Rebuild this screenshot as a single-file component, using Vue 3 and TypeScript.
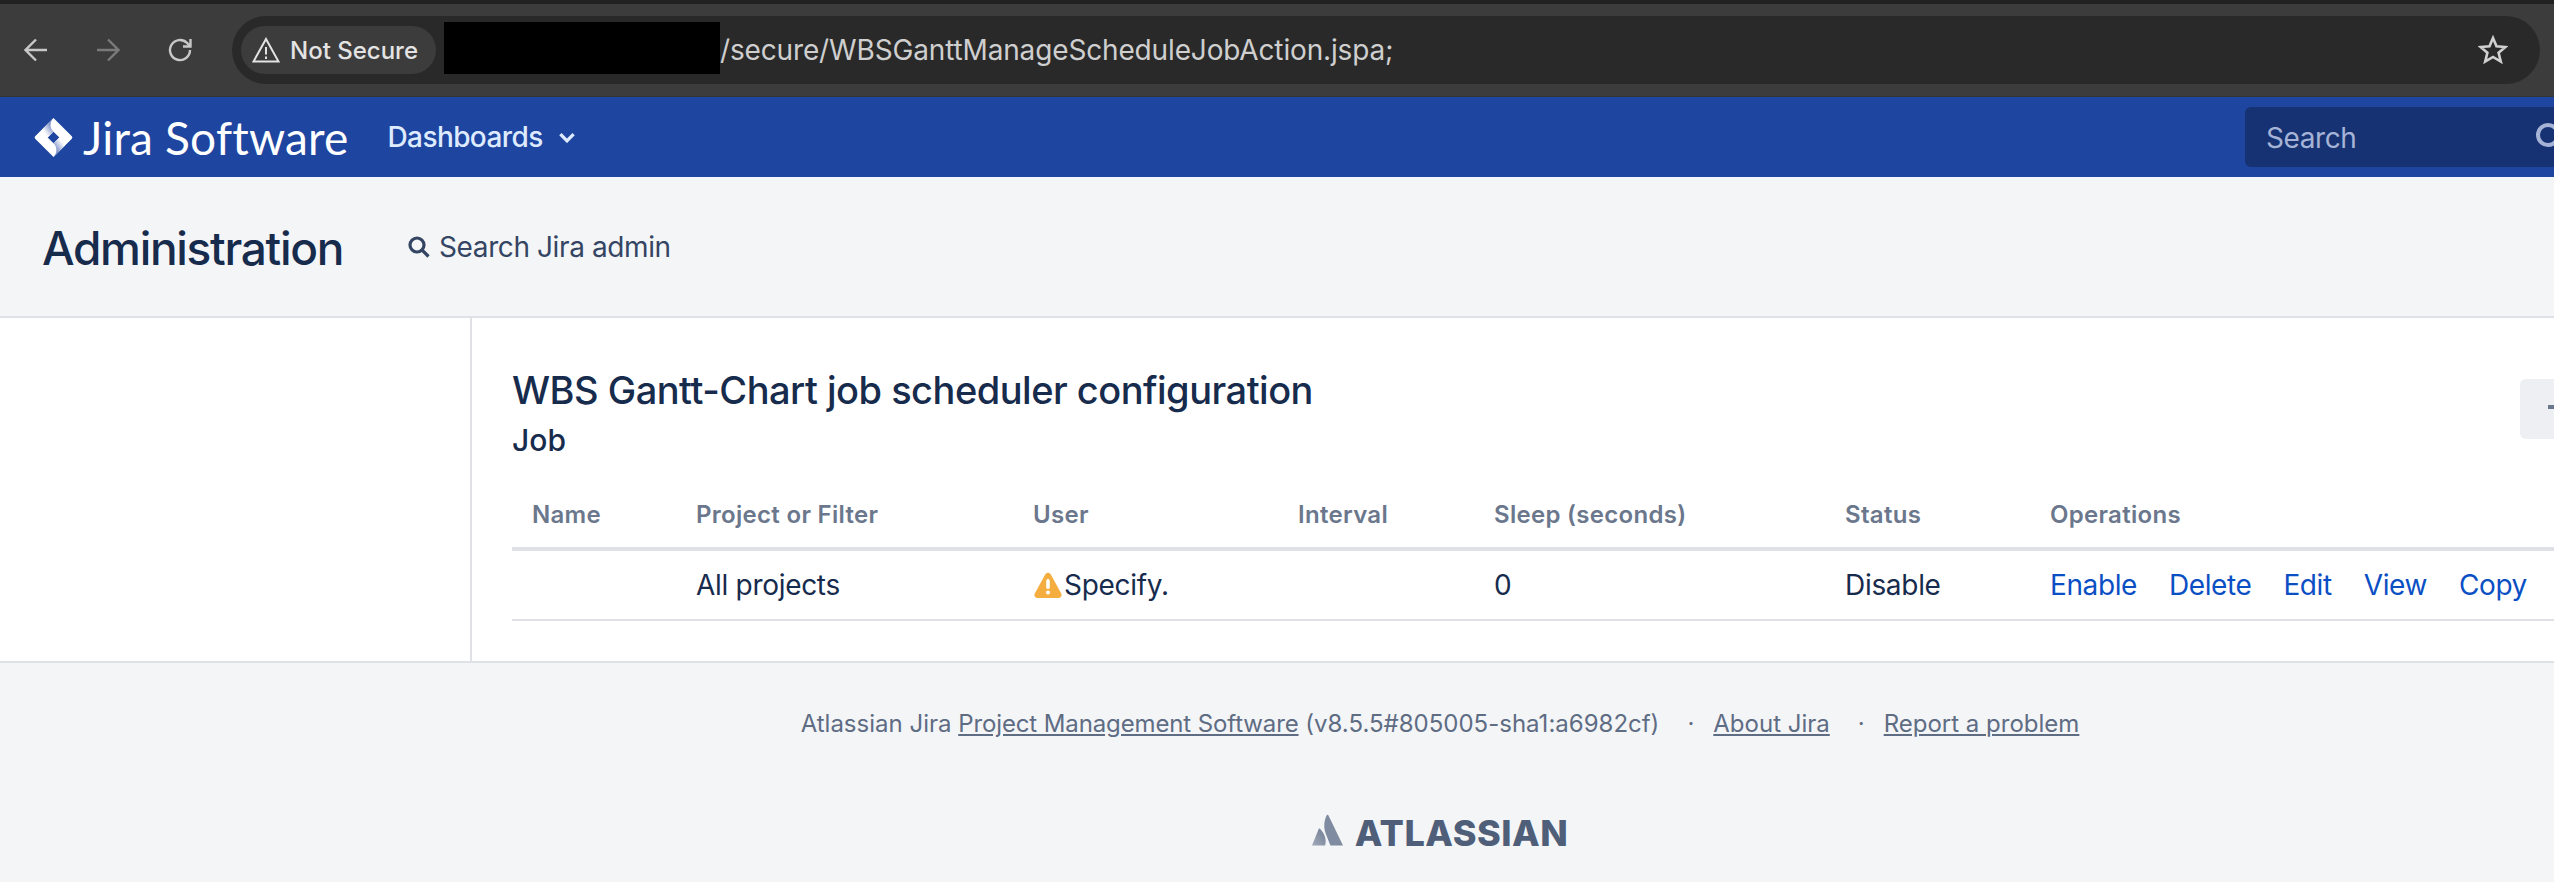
<template>
  <div class="screen">
    <div class="tab-strip"></div>
    <div class="toolbar">
      <svg class="nav-icon" viewBox="0 0 24 24"><path d="M23 12H1.500M12 1.500 1.500 12 12 22.500" /></svg>
      <svg class="nav-icon dim" viewBox="0 0 24 24"><path d="M1 12h21.500M12 1.500 22.500 12 12 22.500" /></svg>
      <svg class="nav-icon" viewBox="0 0 24 24"><path d="M22 12a10 10 0 1 1-3-7.100L22 8M22.500 1v7.500H15" /></svg>
      <div class="omnibox">
        <div class="chip">
          <svg class="warn-outline" viewBox="0 0 28 26"><path d="M14 2 1.500 24.500h25zM14 10v7.500M14 19.500v2.500" /></svg>
          <span>Not Secure</span>
        </div>
        <div class="redact"></div>
        <span class="url">/secure/WBSGanttManageScheduleJobAction.jspa;</span>
        <svg class="star" viewBox="0 0 30 30"><path d="m15 3 3.500 8.300 9 .7-6.900 5.800 2.200 8.800-7.800-4.700-7.800 4.700 2.200-8.800L2.500 12l9-.7z" /></svg>
      </div>
    </div>

    <div class="page">
      <header class="topnav">
        <svg class="jira-mark" viewBox="0 0 40 40">
          <defs>
            <linearGradient id="fadeTop" gradientUnits="userSpaceOnUse" x1="18" y1="8" x2="10" y2="14">
              <stop offset="0" stop-color="#7f93c8" />
              <stop offset="1" stop-color="#ffffff" />
            </linearGradient>
            <linearGradient id="fadeBottom" gradientUnits="userSpaceOnUse" x1="22" y1="32" x2="30" y2="26">
              <stop offset="0" stop-color="#7f93c8" />
              <stop offset="1" stop-color="#ffffff" />
            </linearGradient>
          </defs>
          <path fill="#fff" fill-rule="evenodd" d="M20 0 38.800 18.800a1.700 1.700 0 0 1 0 2.400L20 40 1.200 21.200a1.700 1.700 0 0 1 0-2.400zM20 14l-6 6 6 6 6-6z" />
          <path fill="url(#fadeTop)" d="M20 0 8 12l6 8 6-6c-4-4-4-10 0-14z" />
          <path fill="url(#fadeBottom)" d="M20 40l12-12-6-8-6 6c4 4 4 10 0 14z" />
        </svg>
        <span class="jira-name">Jira Software</span>
        <span class="nav-item">Dashboards</span>
        <svg class="chevron" viewBox="0 0 16 10"><path d="m2 2 6 6 6-6" /></svg>
        <div class="nav-search">
          <span>Search</span>
          <svg class="nav-search-icon" viewBox="0 0 32 32"><circle cx="14" cy="14" r="10" /><path d="m22 22 8 8" /></svg>
        </div>
      </header>

      <div class="admin-head">
        <h1>Administration</h1>
        <svg class="admin-search-icon" viewBox="0 0 22 22"><circle cx="9" cy="9" r="7" /><path d="m14 14 6.500 6.500" /></svg>
        <span class="admin-search">Search Jira admin</span>
      </div>

      <div class="body">
        <aside class="side"></aside>
        <main class="content">
          <div class="title-row">
            <div>
              <h2>WBS Gantt-Chart job scheduler configuration</h2>
              <h3>Job</h3>
            </div>
            <div class="add-btn">
              <svg class="add-icon" viewBox="0 0 16 16"><path d="M0 8h16M8 0v16" /></svg>
            </div>
          </div>
          <table>
            <thead>
              <tr>
                <th v-for="c in columns" :key="c.label" :style="{ width: c.width + 'px' }">{{ c.label }}</th>
              </tr>
            </thead>
            <tbody>
              <tr>
                <td></td>
                <td>All projects</td>
                <td>
                  <svg class="warn" viewBox="0 0 28 26">
                    <path fill="#f6ad3f" d="M11.300 2.300c1.200-2.200 4.200-2.200 5.400 0l10.500 19.200c1.100 2-.3 4.500-2.700 4.500H3.500C1.100 26-.3 23.500.8 21.500z" />
                    <rect x="12.200" y="7" width="3.600" height="10" rx="1.800" fill="#fff" />
                    <circle cx="14" cy="20.500" r="2" fill="#fff" />
                  </svg>Specify.
                </td>
                <td></td>
                <td>0</td>
                <td>Disable</td>
                <td>
                  <div class="ops">
                    <a v-for="op in operations" :key="op">{{ op }}</a>
                  </div>
                </td>
              </tr>
            </tbody>
          </table>
        </main>
      </div>

      <footer class="foot">
        <p>
          Atlassian Jira <a class="tight">Project Management Software</a> <span>(v8.5.5#805005-sha1:a6982cf)</span>
          <span class="sep">·</span>
          <a>About Jira</a>
          <span class="sep">·</span>
          <a>Report a problem</a>
        </p>
        <div class="atl">
          <svg class="atl-mark" viewBox="0 0 32 32">
            <defs>
              <linearGradient id="atlLeft" x1="1" y1="0" x2="0" y2="1">
                <stop offset="0" stop-color="#6f7c93" />
                <stop offset="1" stop-color="#a3abba" />
              </linearGradient>
            </defs>
            <path fill="#7f8ba0" d="M15.300.6c-3 6-3.500 13-1 19.400L19 32h13L16.900.8c-.5-.8-1.300-.8-1.600-.2z" />
            <path fill="url(#atlLeft)" d="M8.500 15c-.6-.7-1.300-.6-1.700.2L0 32h13.500c1.500-5 .5-11-5-17z" />
          </svg>
          <span>ATLASSIAN</span>
        </div>
      </footer>
    </div>
  </div>
</template>

<script setup lang="ts">
const columns = [
  { label: 'Name', width: 164 },
  { label: 'Project or Filter', width: 337 },
  { label: 'User', width: 265 },
  { label: 'Interval', width: 196 },
  { label: 'Sleep (seconds)', width: 351 },
  { label: 'Status', width: 205 },
  { label: 'Operations', width: 810 },
]
const operations = ['Enable', 'Delete', 'Edit', 'View', 'Copy']
</script>

<style>
html,
body {
  margin: 0;
  overflow: hidden;
}
</style>

<style scoped>
.screen {
  width: 2554px;
  height: 882px;
  overflow: hidden;
  font-family: Inter, 'Liberation Sans', sans-serif;
  background: #f4f5f7;
}

.tab-strip {
  height: 4px;
  background: #202120;
}

.toolbar {
  height: 92px;
  background: #3c3c3c;
  border-bottom: 1px solid #333;
  display: flex;
  align-items: center;
  padding-left: 24px;
  gap: 48px;
  box-sizing: content-box;
}

.nav-icon {
  width: 24px;
  height: 24px;
  fill: none;
  stroke: #c8c8c8;
  stroke-width: 2.4;
  flex: none;
}
.nav-icon.dim {
  stroke: #7a7a7a;
}

.omnibox {
  margin-left: -8px;
  width: 2308px;
  height: 68px;
  background: #292929;
  border-radius: 34px;
  display: flex;
  align-items: center;
  padding-left: 9px;
  padding-right: 32px;
  box-sizing: border-box;
  flex: none;
}

.chip {
  width: 195px;
  height: 48px;
  background: #3c3c3c;
  border-radius: 24px;
  display: flex;
  align-items: center;
  padding-left: 11px;
  gap: 10px;
  box-sizing: border-box;
  color: #e3e3e3;
  font-size: 24px;
  font-weight: 500;
  white-space: nowrap;
  flex: none;
}

.warn-outline {
  width: 28px;
  height: 26px;
  fill: none;
  stroke: #e3e3e3;
  stroke-width: 2;
  flex: none;
}

.redact {
  margin-left: 8px;
  margin-bottom: 4px;
  width: 276px;
  height: 52px;
  background: #000;
  flex: none;
}

.url {
  color: #cfcfcf;
  font-size: 28px;
  letter-spacing: -0.15px;
  white-space: nowrap;
}

.star {
  margin-left: auto;
  width: 30px;
  height: 30px;
  fill: none;
  stroke: #d0d0d0;
  stroke-width: 2.600;
  flex: none;
}

.page {
  width: 2880px;
}

.topnav {
  height: 80px;
  background: #1e45a0;
  display: flex;
  align-items: center;
  padding-left: 34px;
  box-sizing: border-box;
}

.jira-mark {
  width: 39px;
  height: 39px;
  flex: none;
}

.jira-name {
  margin-left: 10px;
  font-family: Lato, sans-serif;
  font-size: 46px;
  letter-spacing: 0.2px;
  color: #fff;
  white-space: nowrap;
}

.nav-item {
  margin-left: 39px;
  color: #deebff;
  font-size: 28px;
  font-weight: 500;
  letter-spacing: -0.6px;
}

.chevron {
  margin-left: 15px;
  width: 18px;
  height: 11px;
  fill: none;
  stroke: #deebff;
  stroke-width: 3;
}

.nav-search {
  margin-left: auto;
  margin-right: 35px;
  width: 600px;
  height: 60px;
  background: #163272;
  border-radius: 6px;
  display: flex;
  align-items: center;
  padding-left: 21px;
  box-sizing: border-box;
  color: #a5b3d6;
  font-size: 28px;
  letter-spacing: -0.4px;
  gap: 177px;
}

.nav-search span {
  padding-top: 2px;
}

.nav-search-icon {
  width: 32px;
  height: 32px;
  fill: none;
  stroke: #a5b3d6;
  stroke-width: 4;
}

.admin-head {
  height: 141px;
  border-bottom: 2px solid #dfe1e6;
  display: flex;
  align-items: center;
  padding-left: 42px;
  box-sizing: border-box;
  color: #172b4d;
}

h1 {
  margin: 2px 0 0;
  font-size: 46px;
  font-weight: 500;
  letter-spacing: -1.3px;
}

.admin-search-icon {
  margin-left: 65px;
  width: 22px;
  height: 22px;
  fill: none;
  stroke: #344563;
  stroke-width: 3.2;
}

.admin-search {
  margin-left: 9px;
  font-size: 28px;
  letter-spacing: -0.4px;
  color: #344563;
}

.body {
  height: 345px;
  background: #fff;
  border-bottom: 2px solid #dfe1e6;
  display: flex;
  box-sizing: border-box;
}

.side {
  width: 472px;
  border-right: 2px solid #dfe1e6;
  box-sizing: border-box;
  flex: none;
}

.content {
  flex: 1;
  padding: 48px 40px 0;
  color: #172b4d;
}

.title-row {
  display: flex;
  justify-content: space-between;
  align-items: flex-start;
}

h2 {
  margin: 0;
  font-size: 38px;
  line-height: 48px;
  font-weight: 500;
  letter-spacing: -0.5px;
}

h3 {
  margin: 6px 0 0;
  font-size: 30px;
  line-height: 40px;
  font-weight: 500;
}

.add-btn {
  margin-top: 13px;
  width: 320px;
  height: 60px;
  background: #eeeff2;
  border-radius: 6px;
  box-sizing: border-box;
  padding: 20px 0 0 28px;
}

.add-icon {
  display: block;
  width: 16px;
  height: 16px;
  fill: none;
  stroke: #6b778c;
  stroke-width: 4;
}

table {
  margin-top: 29px;
  width: 2328px;
  border-collapse: collapse;
  table-layout: fixed;
}

th {
  box-sizing: border-box;
  height: 60px;
  padding: 0 0 8px 20px;
  text-align: left;
  font-size: 24px;
  font-weight: 600;
  letter-spacing: 0.3px;
  color: #6b778c;
  border-bottom: 4px solid #dfe1e6;
}

td {
  box-sizing: border-box;
  height: 71px;
  padding: 0 0 0 20px;
  font-size: 28px;
  letter-spacing: -0.3px;
  border-bottom: 2px solid #dfe1e6;
  white-space: nowrap;
}

.warn {
  width: 28px;
  height: 26px;
  margin: 0 2px 0 1px;
  vertical-align: -3px;
}

.ops {
  display: flex;
  gap: 32px;
  letter-spacing: -0.4px;
  color: #0b4fc4;
}

.foot {
  text-align: center;
  color: #5e6c84;
  font-size: 24px;
}

.foot p {
  margin: 0;
  padding-top: 45px;
  line-height: 32px;
}

.foot a {
  text-decoration: underline;
}

.foot a.tight {
  letter-spacing: -0.12px;
}

.sep {
  margin: 0 19px 0 28px;
}

.atl {
  margin-top: 74px;
  display: flex;
  justify-content: center;
  align-items: flex-end;
  gap: 12px;
  color: #505f79;
}

.atl-mark {
  width: 31px;
  height: 32px;
  flex: none;
}

.atl span {
  font-size: 36px;
  line-height: 26px;
  font-weight: 800;
  letter-spacing: 0.5px;
}
</style>
